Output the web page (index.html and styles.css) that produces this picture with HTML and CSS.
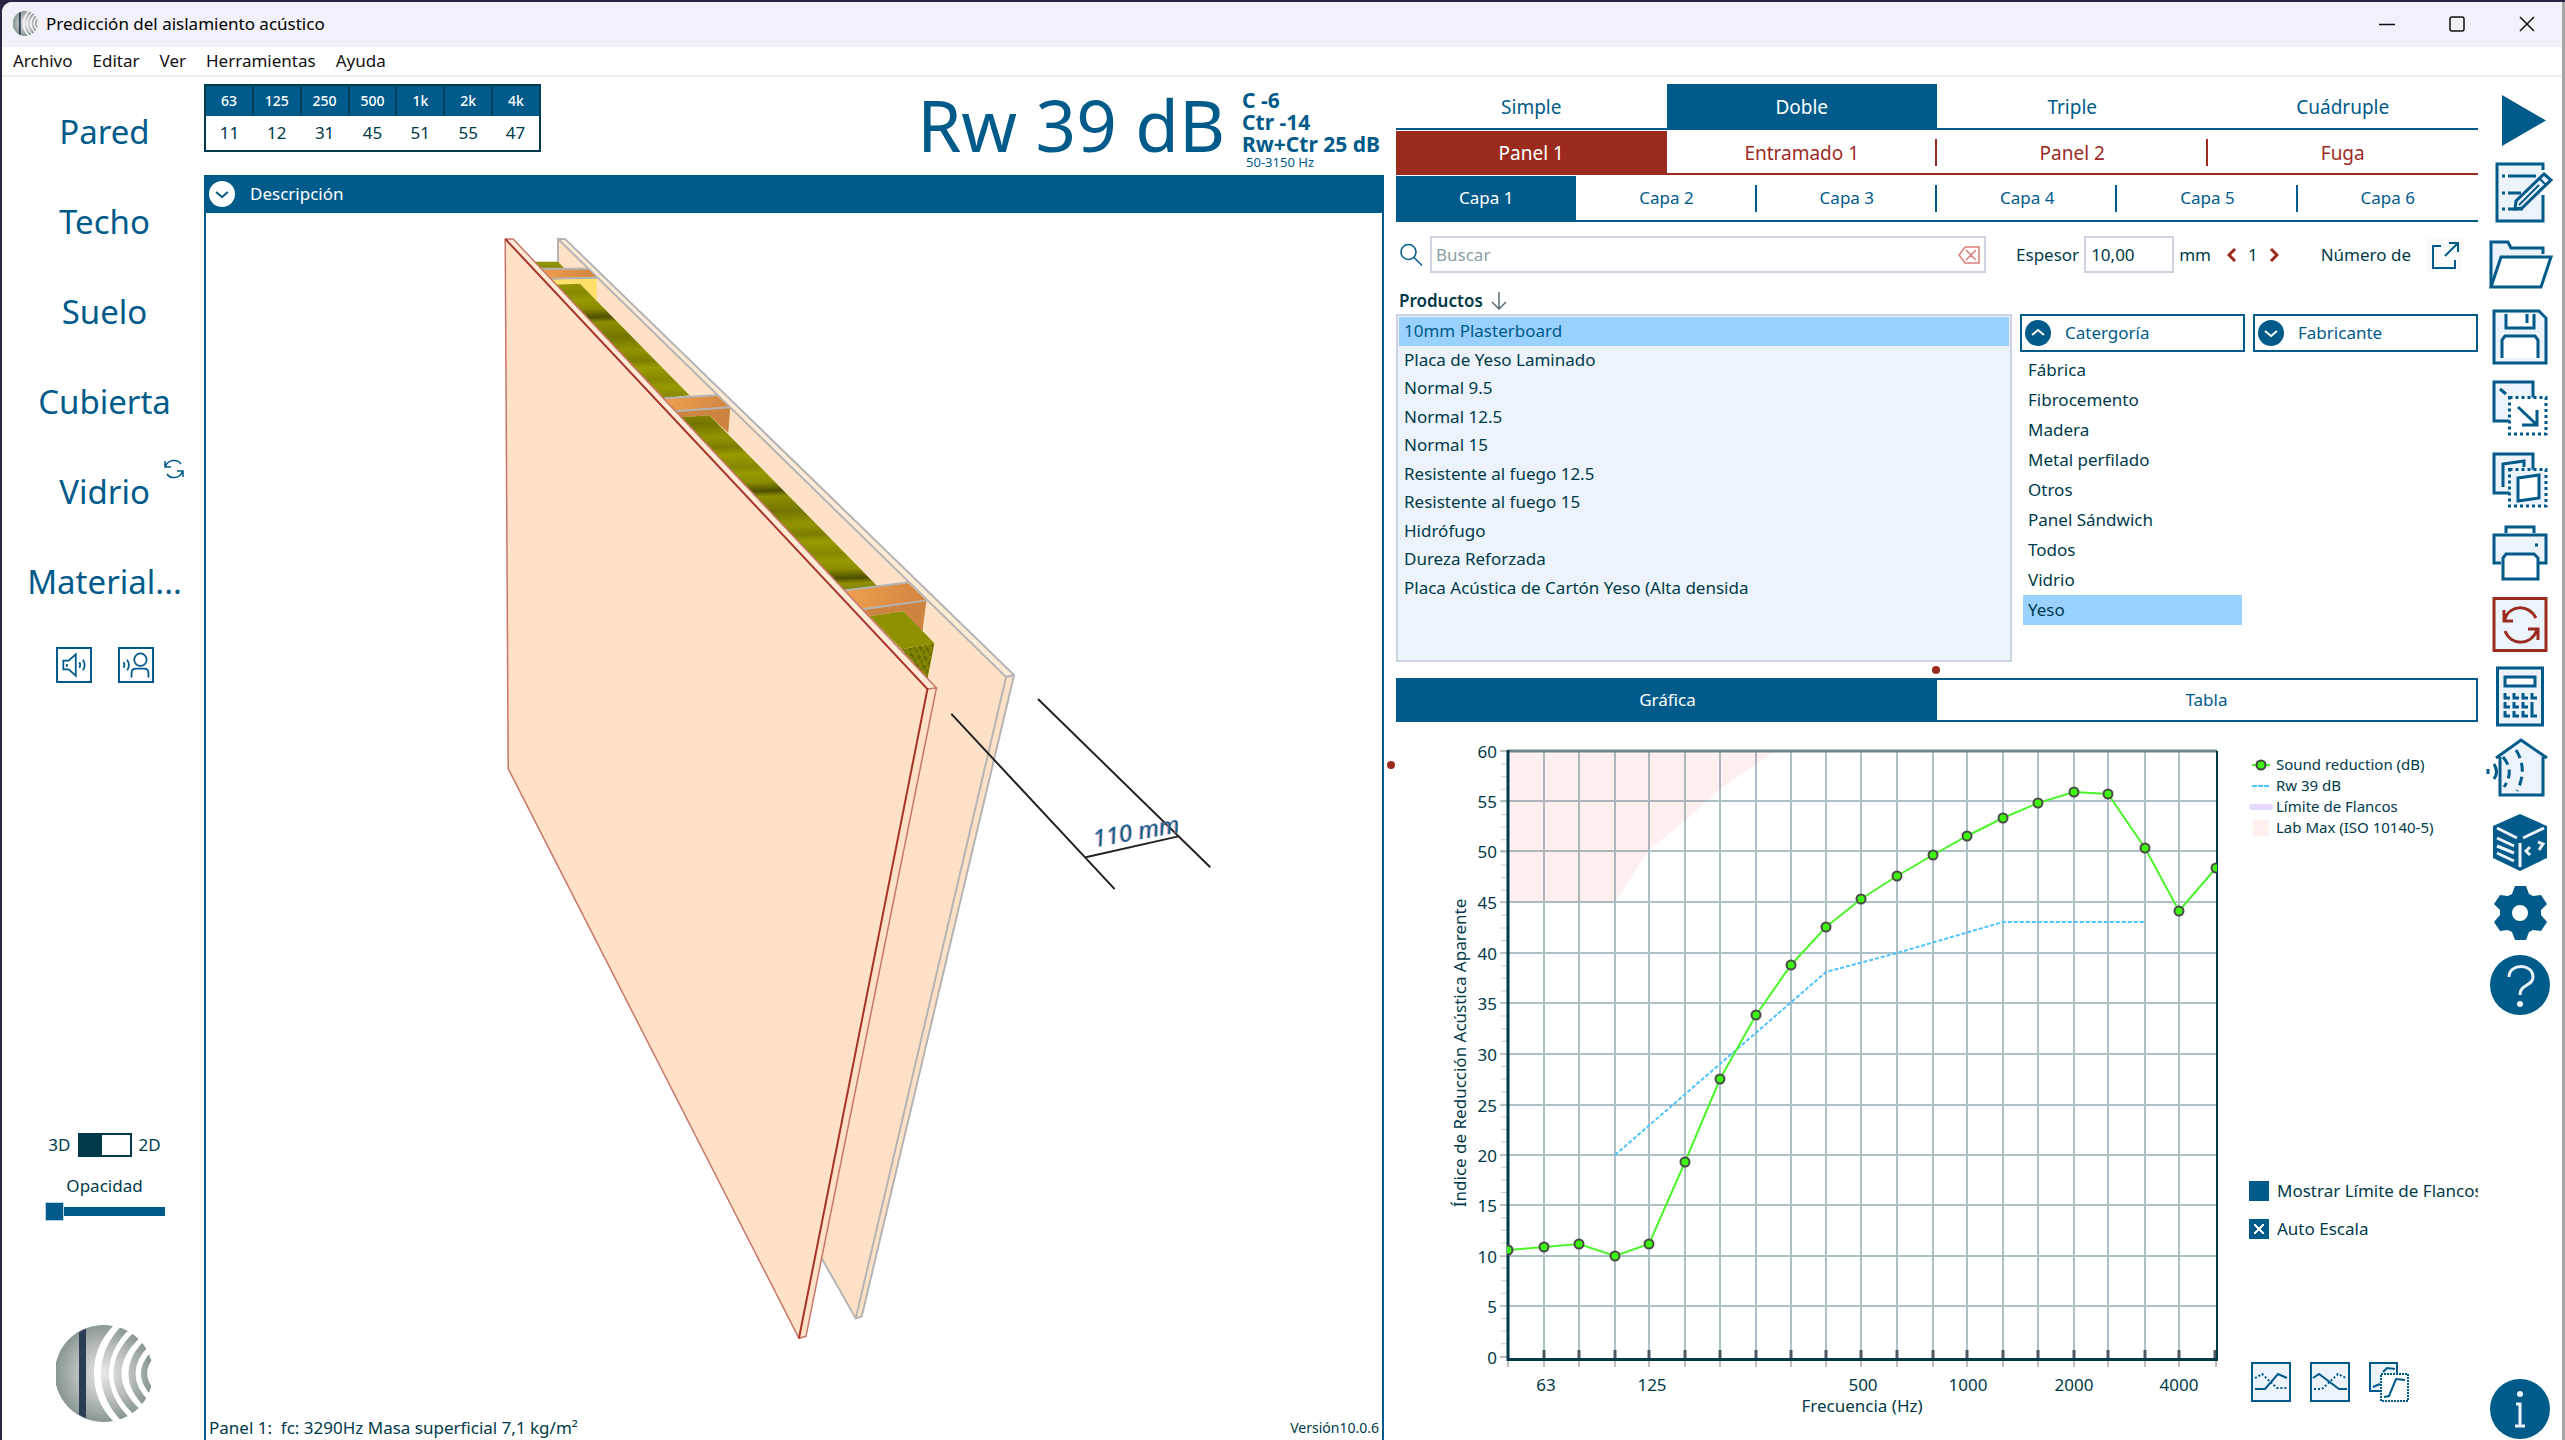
FILE: index.html
```html
<!DOCTYPE html>
<html lang="es">
<head>
<meta charset="utf-8">
<title>Predicción del aislamiento acústico</title>
<link rel="stylesheet" href="styles.css">
</head>
<body>
<div class="window">
  <header class="titlebar">
    <svg class="app-icon" viewBox="0 0 97 97" aria-hidden="true"><use href="#logo"/></svg>
    <h1 class="app-title">Predicción del aislamiento acústico</h1>
    <div class="window-controls">
      <button class="win-btn" aria-label="Minimizar"><svg viewBox="0 0 16 16"><path d="M0 8.500h16"/></svg></button>
      <button class="win-btn" aria-label="Maximizar"><svg viewBox="0 0 16 16"><rect x="1" y="1" width="14" height="14" rx="2"/></svg></button>
      <button class="win-btn" aria-label="Cerrar"><svg viewBox="0 0 16 16"><path d="M1 1l14 14M15 1L1 15"/></svg></button>
    </div>
  </header>

  <nav class="menubar" aria-label="Menú">
    <button class="menu-item">Archivo</button>
    <button class="menu-item">Editar</button>
    <button class="menu-item">Ver</button>
    <button class="menu-item">Herramientas</button>
    <button class="menu-item">Ayuda</button>
  </nav>

  <div class="workspace">
    <aside class="sidebar">
      <button class="element-btn">Pared</button>
      <button class="element-btn">Techo</button>
      <button class="element-btn">Suelo</button>
      <button class="element-btn">Cubierta</button>
      <button class="element-btn">Vidrio
        <svg class="swap-badge" viewBox="0 0 20 20" aria-hidden="true"><path d="M1 2v6h6M1.500 7.500C4 0 14 0 17 5M19 18v-6h-6M18.500 12.500C16 20 6 20 3 15"/></svg>
      </button>
      <button class="element-btn">Material...</button>
      <div class="sound-modes">
        <button class="square-btn" aria-label="Ruido aéreo"><svg viewBox="0 0 36 36"><path d="M6 13h6l8-7v24l-8-7H6zM10 17v3M24 15q2 3 0 6M28 12q4 6 0 12"/></svg></button>
        <button class="square-btn" aria-label="Ruido de impacto"><svg viewBox="0 0 36 36"><circle cx="23" cy="12" r="7"/><path d="M13 32v-5q0-5 5-5h9q5 0 5 5v5M4 15q2 3 0 6M8 12q4 6 0 12"/></svg></button>
      </div>
      <div class="view-options">
        <label class="view-toggle"><span>3D</span><input type="checkbox" class="toggle" aria-label="Vista 2D"><span>2D</span></label>
        <label class="opacity-label" for="opacity">Opacidad</label>
        <input class="opacity" id="opacity" type="range" min="0" max="100" value="0">
      </div>
      <svg class="logo" viewBox="0 0 97 97" aria-hidden="true">
        <defs>
          <radialGradient id="silver" gradientUnits="userSpaceOnUse" cx="48" cy="48" r="48">
            <stop offset="0" stop-color="#e8e8e8"/><stop offset=".55" stop-color="#b9bfbe"/><stop offset="1" stop-color="#8b9896"/>
          </radialGradient>
          <clipPath id="disc"><circle cx="48.500" cy="48.500" r="48.500"/></clipPath>
          <g id="logo">
            <path d="M57 1C44 15 38 30 38 48.500S44 82 57 96A48.500 48.500 0 1 1 57 1z" fill="url(#silver)"/>
            <g clip-path="url(#disc)">
              <path d="M23 0h7v97h-7z" fill="#2b3d54"/>
              <g fill="none" stroke="url(#silver)">
                <path d="M70 2C42 30 42 67 70 95" stroke-width="8"/>
                <path d="M81 10C55 34 55 63 81 87" stroke-width="8"/>
                <path d="M91 18C71 37 71 60 91 79" stroke-width="7"/>
                <path d="M97 29C85 42 85 55 97 68" stroke-width="6"/>
              </g>
            </g>
          </g>
        </defs>
        <use href="#logo"/>
      </svg>
    </aside>

    <main class="construction">
      <section class="summary">
        <table class="octaves">
          <thead><tr><th>63</th><th>125</th><th>250</th><th>500</th><th>1k</th><th>2k</th><th>4k</th></tr></thead>
          <tbody><tr><td>11</td><td>12</td><td>31</td><td>45</td><td>51</td><td>55</td><td>47</td></tr></tbody>
        </table>
        <div class="rating">
          <strong class="rating-main">Rw 39 dB</strong>
          <div class="rating-terms">
            <span>C -6</span><span>Ctr -14</span><span>Rw+Ctr 25 dB</span>
            <small>50-3150 Hz</small>
          </div>
        </div>
      </section>
      <section class="viewer">
        <button class="viewer-head">
          <svg class="disc-icon" viewBox="0 0 26 26"><circle cx="13" cy="13" r="13" fill="#fff"/><path d="M7 11l6 5 6-5" fill="none" stroke="#005b8a" stroke-width="2"/></svg>
          Descripción
        </button>
        <svg class="model" viewBox="206 212 1176 1200" role="img" aria-label="Modelo 3D del panel">
          <defs>
            <linearGradient id="wool" gradientUnits="userSpaceOnUse" x1="560" y1="262" x2="563" y2="352" spreadMethod="repeat">
              <stop offset="0" stop-color="#939400"/><stop offset=".12" stop-color="#7c7d00"/><stop offset=".2" stop-color="#9a9b00"/><stop offset=".34" stop-color="#868700"/><stop offset=".42" stop-color="#989900"/>
              <stop offset=".52" stop-color="#8a8b00"/><stop offset=".62" stop-color="#4f5000"/><stop offset=".68" stop-color="#8e8f00"/><stop offset=".85" stop-color="#747500"/><stop offset="1" stop-color="#939400"/>
            </linearGradient>
            <linearGradient id="stud"><stop offset="0" stop-color="#f0a04f"/><stop offset="1" stop-color="#d08440"/></linearGradient>
            <pattern id="fibre" width="7" height="9" patternUnits="userSpaceOnUse" patternTransform="rotate(12)">
              <path d="M0 0h7v9H0z" fill="#858600"/><path d="M1 1v4M4 4v4M6 0v3" stroke="#4b4c00"/>
            </pattern>
          </defs>
          <path class="board" d="M557 238L1007 678 856 1322 822 1262 557 700z"/>
          <path class="board-edge" d="M557 238h7L1015 676l-8 2z"/>
          <path class="board" d="M1007 678l8-2L862 1320l-6 2z"/>
          <path class="line-grey" d="M557 238h7L1015 676 862 1320l-6 2L822 1262M557 275V238L1007 678 856 1322M1007 678l8-2"/>
          <path fill="url(#wool)" d="M533 261h24l6 6-23 2z"/>
          <path fill="#ffe06b" d="M549 278l47-1v23l-17-17-27 1z"/>
          <path fill="url(#stud)" d="M539 268h48l9 9-47 1z"/>
          <path class="line-grey" d="M539 268h48M549 278l47-1"/>
          <path fill="url(#wool)" d="M552 284l27-1L689 395l-26 3z"/>
          <path fill="#cd8440" d="M675 411l55-4-2 26-19-18-28 2z"/>
          <path fill="url(#stud)" d="M663 398l53-3 14 13-55 3z"/>
          <path class="line-grey" d="M663 398l53-3M675 411l55-4"/>
          <path fill="url(#wool)" d="M680 417l29-2L878 587l-34 4z"/>
          <path fill="#cd8440" d="M863 610l64-9-4 31-19-20-34 5z"/>
          <path fill="url(#stud)" d="M844 591l64-8 19 18-64 9z"/>
          <path class="line-grey" d="M844 591l64-8M863 610l64-9"/>
          <path fill="#8f9000" d="M870 617l34-5 31 32-33 6z"/>
          <path fill="url(#fibre)" d="M902 650l33-6-7 36z"/>
          <path class="board" d="M504 238L928 690 799 1342 507 770z"/>
          <path class="board-edge" d="M504 238h8L937 689l-9 1z"/>
          <path class="board" d="M928 690l9-1L806 1340l-7 2z"/>
          <path class="line-red-soft" d="M504 238l3 532 292 572 7-2L937 689"/>
          <path class="line-red-soft" d="M504 238h8L937 689l-9 1"/>
          <path class="line-red" d="M504 238L928 690 799 1342"/>
          <path class="dim" d="M952 715L1116 891M1039 700l173 169M1087 859l93-21"/>
          <text class="dim-text" transform="translate(1096 849) rotate(-10)">110 mm</text>
        </svg>
        <footer class="viewer-foot">
          <span>Panel 1:&nbsp; fc: 3290Hz Masa superficial 7,1 kg/m²</span>
          <small>Versión10.0.6</small>
        </footer>
      </section>
    </main>

    <section class="editor">
      <nav class="tabs tabs-type" aria-label="Tipo">
        <button class="tab">Simple</button><button class="tab is-active">Doble</button><button class="tab">Triple</button><button class="tab">Cuádruple</button>
      </nav>
      <nav class="tabs tabs-part" aria-label="Elemento">
        <button class="tab is-active">Panel 1</button><button class="tab">Entramado 1</button><button class="tab">Panel 2</button><button class="tab">Fuga</button>
      </nav>
      <nav class="tabs tabs-layer" aria-label="Capa">
        <button class="tab is-active">Capa 1</button><button class="tab">Capa 2</button><button class="tab">Capa 3</button><button class="tab">Capa 4</button><button class="tab">Capa 5</button><button class="tab">Capa 6</button>
      </nav>

      <div class="search-row">
        <svg class="search-icon" viewBox="0 0 24 24" aria-hidden="true"><circle cx="8.500" cy="9" r="7.500"/><path d="M14 14.500l8 8"/></svg>
        <div class="search-box">
          <input type="text" placeholder="Buscar" aria-label="Buscar">
          <button class="clear-btn" aria-label="Borrar"><svg viewBox="0 0 22 18"><path d="M7 1h14v16H7L1 9zM8 4l10 10M18 4L8 14"/></svg></button>
        </div>
        <label class="thickness-label" for="thickness">Espesor</label>
        <input class="thickness" id="thickness" type="text" value="10,00">
        <span class="unit">mm</span>
        <div class="stepper">
          <button aria-label="Menos"><svg viewBox="0 0 10 14"><path d="M8 1L2 7l6 6"/></svg></button>
          <span>1</span>
          <button aria-label="Más"><svg viewBox="0 0 10 14"><path d="M2 1l6 6-6 6"/></svg></button>
        </div>
        <span class="count-label">Número de</span>
        <button class="popout-btn" aria-label="Abrir"><svg viewBox="0 0 36 34"><path d="M14 8H6v22h22v-8M18 18L31 5M22 5h9v9"/></svg></button>
      </div>

      <h2 class="list-title">Productos
        <svg viewBox="0 0 16 18" aria-hidden="true"><path d="M8 0v17M1 10l7 7 7-7"/></svg>
      </h2>
      <div class="browser">
        <ul class="products" role="listbox" aria-label="Productos">
          <li class="is-selected">10mm Plasterboard</li><li>Placa de Yeso Laminado</li><li>Normal 9.5</li><li>Normal 12.5</li><li>Normal 15</li><li>Resistente al fuego 12.5</li><li>Resistente al fuego 15</li><li>Hidrófugo</li><li>Dureza Reforzada</li><li>Placa Acústica de Cartón Yeso (Alta densida</li>
        </ul>
        <div class="filter">
          <button class="filter-head"><svg class="disc-icon" viewBox="0 0 26 26"><circle cx="13" cy="13" r="13" fill="#005b8a"/><path d="M7 15l6-5 6 5" fill="none" stroke="#fff" stroke-width="2"/></svg>Catergoría</button>
          <ul class="categories" role="listbox" aria-label="Catergoría">
            <li>Fábrica</li><li>Fibrocemento</li><li>Madera</li><li>Metal perfilado</li><li>Otros</li><li>Panel Sándwich</li><li>Todos</li><li>Vidrio</li><li class="is-selected">Yeso</li>
          </ul>
        </div>
        <div class="filter">
          <button class="filter-head"><svg class="disc-icon" viewBox="0 0 26 26"><circle cx="13" cy="13" r="13" fill="#005b8a"/><path d="M7 11l6 5 6-5" fill="none" stroke="#fff" stroke-width="2"/></svg>Fabricante</button>
        </div>
      </div>
      <div class="splitter"><i class="grip"></i></div>

      <nav class="result-tabs" aria-label="Resultados">
        <button class="is-active">Gráfica</button><button>Tabla</button>
      </nav>
      <div class="results">
        <i class="grip grip-side"></i>
        <svg class="chart" viewBox="0 0 844 718" role="img" aria-label="Índice de Reducción Acústica Aparente por frecuencia">
          <path fill="#ffefef" d="M112 29H379L324 67 289 99 253 128 219 180H112z"/>
          <path class="grid" d="M148 29V637M183 29V637M219 29V637M253 29V637M289 29V637M324 29V637M360 29V637M395 29V637M430 29V637M465 29V637M501 29V637M537 29V637M571 29V637M607 29V637M642 29V637M678 29V637M712 29V637M749 29V637M783 29V637M104 79H820M104 129H820M104 180H820M104 231H820M104 281H820M104 332H820M104 383H820M104 433H820M104 483H820M104 534H820M104 584H820"/>
          <path class="minor" d="M108 29V635" />
          <path class="tick-out" d="M104 29h8M104 635h8M112 638v7M148 638v7M183 638v7M219 638v7M253 638v7M289 638v7M324 638v7M360 638v7M395 638v7M430 638v7M465 638v7M501 638v7M537 638v7M571 638v7M607 638v7M642 638v7M678 638v7M712 638v7M749 638v7M783 638v7M820 638v7"/>
          <path class="tick-in" d="M148 628v8M183 628v8M219 628v8M253 628v8M289 628v8M324 628v8M360 628v8M395 628v8M430 628v8M465 628v8M501 628v8M537 628v8M571 628v8M607 628v8M642 628v8M678 628v8M712 628v8M749 628v8M783 628v8M819 628v8"/>
          <path class="frame-top" d="M112 29H821"/>
          <path class="frame-right" d="M821 29V638"/>
          <path class="axis" d="M112 28V637.500H822"/>
          <path class="curve-ref" d="M219 433L430 250 501 231 607 200H749"/>
          <clipPath id="plot"><path d="M111 0h710v700H111z"/></clipPath>
          <g clip-path="url(#plot)">
            <path class="curve" d="M112 528L148 525 183 522 219 534 253 522 289 440 324 357 360 293 395 243 430 205 465 177 501 154 537 133 571 114 607 96 642 81 678 70 712 72 749 126 783 189 820 146"/>
            <g class="dots"><circle cx="112" cy="528" r="4.500"/><circle cx="148" cy="525" r="4.500"/><circle cx="183" cy="522" r="4.500"/><circle cx="219" cy="534" r="4.500"/><circle cx="253" cy="522" r="4.500"/><circle cx="289" cy="440" r="4.500"/><circle cx="324" cy="357" r="4.500"/><circle cx="360" cy="293" r="4.500"/><circle cx="395" cy="243" r="4.500"/><circle cx="430" cy="205" r="4.500"/><circle cx="465" cy="177" r="4.500"/><circle cx="501" cy="154" r="4.500"/><circle cx="537" cy="133" r="4.500"/><circle cx="571" cy="114" r="4.500"/><circle cx="607" cy="96" r="4.500"/><circle cx="642" cy="81" r="4.500"/><circle cx="678" cy="70" r="4.500"/><circle cx="712" cy="72" r="4.500"/><circle cx="749" cy="126" r="4.500"/><circle cx="783" cy="189" r="4.500"/><circle cx="820" cy="146" r="4.500"/></g>
          </g>
          <g class="y-labels"><text x="101" y="36">60</text><text x="101" y="86">55</text><text x="101" y="136">50</text><text x="101" y="187">45</text><text x="101" y="238">40</text><text x="101" y="288">35</text><text x="101" y="339">30</text><text x="101" y="390">25</text><text x="101" y="440">20</text><text x="101" y="490">15</text><text x="101" y="541">10</text><text x="101" y="591">5</text><text x="101" y="642">0</text></g>
          <g class="x-labels"><text x="150" y="669">63</text><text x="256" y="669">125</text><text x="467" y="669">500</text><text x="572" y="669">1000</text><text x="678" y="669">2000</text><text x="783" y="669">4000</text><text x="466" y="690">Frecuencia (Hz)</text><text transform="translate(70 331) rotate(-90)">Índice de Reducción Acústica Aparente</text></g>
        </svg>
        <div class="chart-side">
          <ul class="legend">
            <li><svg viewBox="0 0 24 12"><path d="M3 6h18" stroke="#4cf52a" stroke-width="2"/><circle cx="12" cy="6" r="4.500" fill="#3df50c" stroke="#444" stroke-width="2"/></svg>Sound reduction (dB)</li>
            <li><svg viewBox="0 0 24 12"><path d="M3 6h18" stroke="#4cc4ff" stroke-width="2" stroke-dasharray="5 1"/></svg>Rw 39 dB</li>
            <li><svg viewBox="0 0 24 12"><path d="M3 6h18" stroke="#e6dbff" stroke-width="6" stroke-linecap="round"/></svg>Límite de Flancos</li>
            <li><svg viewBox="0 0 24 12"><path d="M4-2h16v16H4z" fill="#ffefef"/></svg>Lab Max (ISO 10140-5)</li>
          </ul>
          <div class="checks">
            <label><input type="checkbox">Mostrar Límite de Flancos</label>
            <label><input type="checkbox" checked>Auto Escala</label>
          </div>
          <div class="chart-tools">
            <button aria-label="Curva A"><svg viewBox="0 0 40 40"><path class="box" d="M1 1h38v38H1z"/><path d="M4 27h10L27 12l9 4"/><path stroke-dasharray="2 2" d="M4 16l7-4 15 14h10"/></svg></button>
            <button aria-label="Curva B"><svg viewBox="0 0 40 40"><path class="box" d="M1 1h38v38H1z"/><path d="M3 16l6-4 20 15h8"/><path stroke-dasharray="2 2" d="M4 27h8l16-15 8 4"/></svg></button>
            <button aria-label="Copiar gráfica"><svg viewBox="0 0 40 40"><path class="box" d="M1 1h27v28H1z"/><path d="M4 25l7-3M14 10l4-4 8 1"/><path d="M12 12h27v27H12z" fill="#fff" stroke-dasharray="2 1"/><path d="M15 35l5-1 7-17 9 1"/></svg></button>
          </div>
        </div>
      </div>
    </section>

    <aside class="rail">
      <button class="rail-btn" aria-label="Calcular"><svg viewBox="0 0 72 72"><path class="solid" d="M18 11l44 25.500L18 62z"/></svg></button>
      <button class="rail-btn" aria-label="Notas"><svg viewBox="0 0 72 72"><path class="tint bare" d="M13 8h46v57H13z"/><path d="M59 14V8H13v57h46V39M24 20h28M24 37h13M24 53h15M18 20h3M18 37h3M18 53h3"/><path class="tint" stroke-width="3" d="M60 18l7 6-29 28-7 1 1-8z"/><path d="M55 22l7 7M35 49l20-20" stroke-width="2"/></svg></button>
      <button class="rail-btn" aria-label="Abrir"><svg viewBox="0 0 72 72"><path class="tint bare" d="M7 59V14h17l3 6h32v9H17z"/><path d="M7 59V14h17l3 6h32v6"/><path class="white" d="M17 29h50L57 59H7z"/></svg></button>
      <button class="rail-btn" aria-label="Guardar"><svg viewBox="0 0 72 72"><path class="tint" d="M10 11h45l7 7v45H10z"/><path class="white" d="M22 14v14h28V14M43 14v9M18 58V40l3-4h30l3 4v18"/></svg></button>
      <button class="rail-btn" aria-label="Exportar"><svg viewBox="0 0 72 72"><path class="tint bare" d="M10 10h39v39H10z"/><path d="M49 28V10H10v39h18M16 17l6 5"/><path class="white" stroke-dasharray="3 3" d="M25.500 25.500h36.500v36.500H25.500z"/><path d="M34 35l19 18M53 38v15H38"/></svg></button>
      <button class="rail-btn" aria-label="Duplicar"><svg viewBox="0 0 72 72"><path class="tint bare" d="M10 10h39v39H10z"/><path d="M49 28V10H10v39h18M19 43V20l21-3v6"/><path class="tint" stroke-dasharray="3 3" d="M25.500 25.500h36.500v36.500H25.500z"/><path class="white" d="M34 34l21-3v23l-21 3z"/></svg></button>
      <button class="rail-btn" aria-label="Imprimir"><svg viewBox="0 0 72 72"><path class="tint bare" d="M10 19h52v28H10z"/><path d="M22 17v-6h28v6M17 47h-7V19h52v28h-7M51 29h3"/><path class="white" d="M19 63V42l3-4h28l4 4v21z"/></svg></button>
      <button class="rail-btn is-red" aria-label="Actualizar"><svg viewBox="0 0 72 72"><path class="tint" d="M10 10.500h52v52H10z"/><path d="M20 22v11h9M20 33C25 16 45 16 52 30M44 41h10v11M53 42C47 58 27 58 21 43"/></svg></button>
      <button class="rail-btn" aria-label="Calculadora"><svg viewBox="0 0 72 72"><path class="tint" d="M13.500 8h45v57h-45z"/><path class="white" d="M21 17h30v9H21z"/><path d="M21 33v5h5M30 33v5h5M39 33v5h5M48 33v5h5M21 42v5h5M30 42v5h5M39 42v5h5M21 51v5h5M30 51v5h5M39 51v5h5M48 42v14h5"/></svg></button>
      <button class="rail-btn" aria-label="Edificio"><svg viewBox="0 0 72 72"><path class="tint bare" d="M16 25L37 9l22 16v38H16z"/><path d="M12 26L37 8l26 18M16 25v38h43V25M4 37v5M10 32q5 8 0 15"/><path stroke-dasharray="9 5" d="M19 25q12 14 1 30M32 18q12 19 1 41"/></svg></button>
      <button class="rail-btn" aria-label="Biblioteca"><svg viewBox="0 0 72 72"><path class="solid" d="M36 10l27 12v32L36 67 9 54V22z"/><path class="light" d="M13 24l20 10M39 34l21-10M36 39v24M13 34l17 8M13 42l17 7M13 49l17 8M46 43l-4 4 4 4M54 38l5 2-4 6"/></svg></button>
      <button class="rail-btn" aria-label="Ajustes"><svg viewBox="0 0 72 72"><path class="solid" fill-rule="evenodd" d="M31 10h11l3 8 4 2 8-1 6 9-6 6v5l6 7-6 9-8-1-4 2-3 8H31l-3-8-4-2-8 1-6-9 6-7v-5l-6-6 6-9 8 1 4-2zM36 29a8 8 0 1 0 0 16 8 8 0 0 0 0-16z"/></svg></button>
      <button class="rail-btn" aria-label="Ayuda"><svg viewBox="0 0 72 72"><circle class="solid" cx="36" cy="37" r="30"/><path class="light" d="M25 29c0-14 24-14 24 0 0 9-13 7-13 18"/><circle cx="36" cy="56" r="3" fill="#ecf3fb" stroke="none"/></svg></button>
      <button class="rail-btn rail-info" aria-label="Información"><svg viewBox="6 6 60 60"><circle class="solid" cx="36" cy="36" r="30"/><path class="light" d="M32 31h4v22M31 53h10"/><circle cx="36" cy="21" r="3" fill="#ecf3fb" stroke="none"/></svg></button>
    </aside>
  </div>
</div>
</body>
</html>
```
FILE: styles.css
```css
:root {
  --blue: #005b8a;
  --ink: #003a4a;
  --red: #9c2b1f;
  --tint: #ecf3fb;
  --select: #99d1ff;
  --line: #cdd3e2;
}

* { box-sizing: border-box; }

body {
  margin: 0;
  padding: 2px 3px 0 2px;
  height: 100vh;
  overflow: hidden;
  background:
    linear-gradient(#2c2440, #2c2440) top / 100% 2px no-repeat,
    linear-gradient(90deg, #2c2440 50%, #a6a6a6 50%);
  color: var(--ink);
  font: 17px/24px "Noto Sans", "Open Sans", sans-serif;
}

button, input { font: inherit; color: inherit; }
button { padding: 0; border: 0; background: none; cursor: pointer; }
ul { margin: 0; padding: 0; list-style: none; }
svg { display: block; fill: none; }

.window {
  display: flex;
  flex-direction: column;
  height: 100%;
  border-radius: 10px 0 0 0;
  overflow: hidden;
  background: #fff;
}

/* Title bar and menu */
.titlebar {
  display: flex;
  align-items: center;
  height: 45px;
  padding: 0 0 2px 11px;
  background: #f2f0f8;
  color: #000;
}
.app-icon { width: 25px; height: 25px; margin-right: 8px; }
.app-title { flex: 1; margin: 0; font-size: 17px; font-weight: 400; }
.window-controls { display: flex; }
.win-btn { display: grid; place-items: center; width: 70px; height: 43px; }
.win-btn svg { width: 16px; height: 16px; stroke: #111; stroke-width: 1.5; }

.menubar {
  display: flex;
  gap: 20px;
  height: 30px;
  padding: 0 11px;
  border-bottom: 2px solid #f0f0f0;
  color: #111;
}

/* Four columns: elements, construction, editor, tools */
.workspace {
  flex: 1;
  min-height: 0;
  display: grid;
  grid-template-columns: 202px minmax(0, 1180fr) minmax(0, 1094fr) 84px;
}

/* Sidebar */
.sidebar {
  display: flex;
  flex-direction: column;
  align-items: center;
  padding: 10px 0 18px 3px;
}
.element-btn {
  position: relative;
  width: 100%;
  height: 90px;
  color: var(--blue);
  font-size: 33px;
}
.swap-badge {
  position: absolute;
  top: 12px;
  right: 20px;
  width: 20px;
  height: 20px;
  stroke: var(--blue);
  stroke-width: 1.5;
}
.sound-modes { display: flex; gap: 26px; margin-top: 20px; }
.square-btn { width: 36px; height: 36px; border: 2px solid var(--blue); }
.square-btn svg { width: 32px; height: 32px; stroke: var(--blue); stroke-width: 2; }
.view-options {
  display: flex;
  flex-direction: column;
  align-items: center;
  margin-top: auto;
}
.view-toggle { display: flex; align-items: center; gap: 7px; margin-bottom: 17px; }
.toggle {
  appearance: none;
  width: 54px;
  height: 24px;
  margin: 0;
  border: 2px solid var(--ink);
  background: linear-gradient(90deg, var(--ink) 45%, #fff 45%);
}
.opacity-label { margin-bottom: 4px; }
.opacity {
  appearance: none;
  width: 120px;
  height: 18px;
  margin: 0;
  background: linear-gradient(var(--blue), var(--blue)) center / 100% 9px no-repeat;
}
.opacity::-webkit-slider-thumb {
  appearance: none;
  width: 19px;
  height: 19px;
  border: 1px solid #b8d4e8;
  background: var(--blue);
}
.logo { width: 97px; height: 97px; margin-top: 105px; }

/* Summary above the model */
.construction { display: flex; flex-direction: column; min-height: 0; }
.summary {
  display: flex;
  justify-content: space-between;
  align-items: flex-start;
  height: 98px;
  padding: 7px 4px 0 0;
}
.octaves {
  width: 337px;
  border: 2px solid var(--ink);
  border-collapse: collapse;
  table-layout: fixed;
  text-align: center;
}
.octaves th {
  height: 31px;
  padding: 0;
  border-right: 2px solid #00405f;
  background: var(--blue);
  color: #fff;
  font-size: 14px;
  font-weight: 500;
}
.octaves td { height: 35px; padding: 0; }
.rating { display: flex; gap: 17px; color: var(--blue); }
.rating-main { font-size: 71px; font-weight: 400; line-height: 82px; }
.rating-terms {
  display: flex;
  flex-direction: column;
  padding-top: 5px;
  font-size: 21px;
  font-weight: 700;
  line-height: 22px;
}
.rating-terms small { padding-left: 4px; font-size: 13px; font-weight: 400; line-height: 14px; }

/* Model viewer */
.viewer {
  flex: 1;
  display: flex;
  flex-direction: column;
  min-height: 0;
  border: 2px solid var(--blue);
  border-width: 0 2px;
}
.viewer-head {
  display: flex;
  flex: none;
  align-items: center;
  gap: 15px;
  height: 38px;
  padding-left: 3px;
  background: var(--blue);
  color: #fff;
}
.disc-icon { width: 26px; height: 26px; }
.model { width: 100%; height: auto; }
.board { fill: #fee1c6; }
.board-edge { fill: #fdebd6; }
.line-grey { stroke: #b4b4b4; stroke-width: 2; }
.line-red { stroke: #a8322a; stroke-width: 2; }
.line-red-soft { stroke: #c8776a; stroke-width: 1.5; }
.dim { stroke: #222; stroke-width: 2; }
.dim-text { fill: var(--blue); font-size: 24px; font-style: italic; filter: drop-shadow(-1px 0 0 #e08a9a); }
.viewer-foot {
  display: flex;
  justify-content: space-between;
  padding: 8px 3px 0;
  white-space: nowrap;
}
.viewer-foot small { font-size: 14px; }

/* Editor tabs */
.editor { display: flex; flex-direction: column; min-width: 0; padding: 7px 0 0 12px; }
.tabs { display: flex; margin-bottom: 1px; border-bottom: 2px solid var(--blue); color: var(--blue); }
.tab { flex: 1; height: 44px; }
.tabs .is-active { background: var(--blue); color: #fff; }
.tabs-type, .tabs-part { font-size: 19px; }
.tabs-type .tab, .tabs-part .tab { padding-top: 2px; }
.tabs-part { border-color: var(--red); color: var(--red); }
.tabs-part .tab { height: 42px; }
.tabs-part .is-active { background: var(--red); }
.tabs-part .tab:not(.is-active):not(:last-child),
.tabs-layer .tab:not(.is-active):not(:last-child) {
  background: linear-gradient(currentColor, currentColor) right center / 2px 27px no-repeat;
}

/* Search row */
.search-row { display: flex; align-items: center; height: 37px; margin-top: 13px; }
.search-icon { width: 24px; height: 24px; margin: 0 6px 0 4px; stroke: var(--blue); stroke-width: 1.5; }
.search-box {
  display: flex;
  flex: 1;
  align-items: center;
  height: 37px;
  padding: 0 4px;
  border: 2px solid var(--line);
}
.search-box input { flex: 1; min-width: 0; padding: 0; border: 0; outline: 0; }
.search-box input::placeholder { color: #8aa0a6; }
.clear-btn svg { width: 22px; height: 18px; stroke: #d9807a; stroke-width: 1.5; }
.thickness-label { margin: 0 5px 0 30px; }
.thickness { width: 90px; height: 37px; padding: 0 5px; border: 2px solid var(--line); }
.unit { margin: 0 16px 0 5px; }
.stepper { display: flex; align-items: center; gap: 11px; }
.stepper svg { width: 10px; height: 14px; stroke: var(--red); stroke-width: 3; }
.count-label { margin: 0 16px 0 42px; }
.popout-btn { margin-right: 15px; background: #fafafa; }
.popout-btn svg { width: 36px; height: 34px; stroke: var(--blue); stroke-width: 2; }

/* Product browser */
.list-title {
  display: flex;
  align-items: center;
  gap: 8px;
  height: 26px;
  margin: 15px 0 0 3px;
  font-size: 17px;
  font-weight: 600;
}
.list-title svg { width: 16px; height: 18px; stroke: #5a7077; stroke-width: 1.5; }
.browser {
  display: grid;
  grid-template-columns: minmax(0, 616fr) minmax(0, 225fr) minmax(0, 225fr);
  gap: 8px;
  height: 348px;
}
.products {
  display: grid;
  grid-auto-rows: 1fr;
  align-items: center;
  padding: 1px 1px 58px;
  border: 2px solid var(--line);
  background: var(--tint);
}
.products li { display: flex; align-items: center; align-self: stretch; padding-left: 5px; }
.is-selected { background: var(--select); }
.products .is-selected { color: var(--blue); }
.filter-head {
  display: flex;
  align-items: center;
  gap: 14px;
  width: 100%;
  height: 38px;
  padding-left: 3px;
  border: 2px solid var(--blue);
  color: var(--blue);
}
.categories { padding: 3px 3px 0; }
.categories li { height: 30px; padding-left: 5px; line-height: 30px; }

.splitter { display: grid; place-items: center; height: 16px; padding-right: 2px; }
.grip { width: 8px; height: 8px; border-radius: 50%; background: var(--red); }
.grip-side { position: absolute; left: -9px; top: 39px; }

/* Results */
.result-tabs { display: flex; border: 2px solid var(--blue); color: var(--blue); }
.result-tabs button { flex: 1; height: 40px; }
.result-tabs .is-active { background: var(--blue); color: #fff; }
.results {
  position: relative;
  flex: 1;
  display: grid;
  grid-template-columns: minmax(0, 844fr) minmax(0, 238fr);
  min-height: 0;
}
.chart { width: 100%; height: auto; }
.chart text { fill: var(--ink); font-size: 17px; }
.y-labels { text-anchor: end; }
.x-labels { text-anchor: middle; }
.grid { stroke: rgba(0, 58, 74, .32); stroke-width: 2; }
.minor { stroke: #ccc; stroke-width: 6; stroke-dasharray: 1 11.6; }
.tick-out { stroke: #c2bcbc; stroke-width: 2; }
.tick-in { stroke: #4a5a60; stroke-width: 3; }
.frame-top { stroke: #6d8790; stroke-width: 3; }
.frame-right { stroke: var(--ink); stroke-width: 2; }
.axis { stroke: var(--ink); stroke-width: 3; }
.curve { stroke: #4cf52a; stroke-width: 2; }
.curve-ref { stroke: #4cc4ff; stroke-width: 2; stroke-dasharray: 4 2; }
.dots { fill: #3df50c; stroke: #4a4a4a; stroke-width: 2; }

.chart-side { display: flex; flex-direction: column; min-width: 0; padding: 32px 0 38px 9px; }
.legend li { display: flex; align-items: center; gap: 3px; height: 21px; font-size: 15px; line-height: 21px; white-space: nowrap; }
.legend svg { flex: none; width: 24px; height: 12px; overflow: visible; }
.checks { margin-top: auto; margin-bottom: 114px; overflow: hidden; }
.checks label { display: flex; align-items: center; gap: 8px; height: 38px; white-space: nowrap; }
.checks input { appearance: none; flex: none; width: 20px; height: 20px; margin: 0; background: var(--blue); }
.checks input:checked {
  background:
    linear-gradient(45deg, transparent 42%, #fff 42% 58%, transparent 58%) center / 10px 10px no-repeat,
    linear-gradient(-45deg, transparent 42%, #fff 42% 58%, transparent 58%) center / 10px 10px no-repeat,
    var(--blue);
}
.chart-tools { display: flex; gap: 19px; padding-left: 2px; }
.chart-tools svg { width: 40px; height: 40px; stroke: var(--blue); stroke-width: 2; }
.chart-tools .box { fill: var(--tint); }

/* Tool rail */
.rail { display: flex; flex-direction: column; align-items: center; padding-top: 7px; }
.rail-btn { flex: none; width: 72px; height: 72px; color: var(--blue); }
.rail-btn svg { width: 100%; height: 100%; stroke: currentColor; stroke-width: 3; }
.rail-btn.is-red { color: var(--red); }
.rail-info { width: 60px; height: 60px; margin-top: auto; margin-bottom: 1px; }
.rail .tint { fill: var(--tint); }
.rail .bare { stroke: none; }
.rail .white { fill: #fff; }
.rail .solid { fill: currentColor; stroke: none; }
.rail .light { stroke: var(--tint); }
```
